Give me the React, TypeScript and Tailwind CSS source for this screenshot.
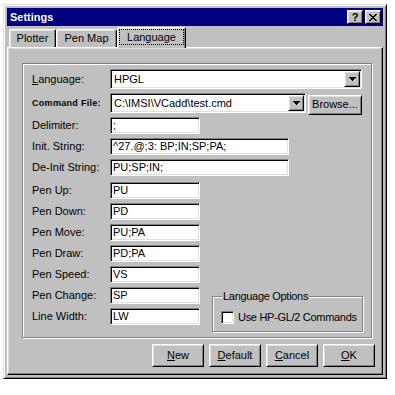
import React from 'react';

const raised =
  'border border-t-white border-l-white border-r-black border-b-black shadow-[inset_1px_1px_0_#dfdfdf,inset_-1px_-1px_0_#808080]';
const sunken =
  'border border-t-[#808080] border-l-[#808080] border-r-white border-b-white shadow-[inset_1px_1px_0_#000,inset_-1px_-1px_0_#dfdfdf]';
const etched = 'border border-[#808080] shadow-[inset_1px_1px_0_#fff,1px_1px_0_#fff]';

const Arrow = () => (
  <svg width="7" height="4" viewBox="0 0 7 4" shapeRendering="crispEdges">
    <polygon points="0,0 7,0 3.5,4" fill="#000" />
  </svg>
);

const Field = ({ label, value, width }: { label: React.ReactNode; value: string; width: string }) => (
  <div className="flex items-center h-[17px]">
    <div className="w-[78px] text-[11px] leading-none">{label}</div>
    <div className={`${sunken} ${width} h-[17px] bg-white flex items-center pl-[2px] text-[11px] leading-none`}>
      {value}
    </div>
  </div>
);

const Combo = ({ value, width }: { value: string; width: string }) => (
  <div className={`${sunken} ${width} h-[20px] bg-white flex items-stretch p-[1px]`}>
    <div className="flex-1 flex items-center pl-[2px] text-[11px] leading-none">{value}</div>
    <div className={`${raised} w-[16px] bg-[#c0c0c0] flex items-center justify-center`}>
      <Arrow />
    </div>
  </div>
);

const Btn = ({ k, rest, w = 'w-[52px]', h = 'h-[23px]' }: { k: string; rest: string; w?: string; h?: string }) => (
  <button className={`${raised} ${w} ${h} bg-[#c0c0c0] text-[11px] leading-none flex items-center justify-center`}>
    <span className="underline underline-offset-[1px]">{k}</span>
    {rest}
  </button>
);

export default function App() {
  return (
    <div className="min-h-[395px] bg-white pt-[4px] pl-[3px] text-black font-['Liberation_Sans',Arial,sans-serif]">
      <div className="w-[384px] h-[375px] bg-[#c0c0c0] border border-t-[#dfdfdf] border-l-[#dfdfdf] border-r-black border-b-black shadow-[inset_1px_1px_0_#fff,inset_-1px_-1px_0_#808080] p-[3px] flex flex-col">
        {/* title bar */}
        <div className="h-[18px] bg-[#000080] flex items-center justify-between pl-[3px] pr-[2px]">
          <span className="text-white font-bold text-[11px] leading-none">Settings</span>
          <div className="flex gap-[2px]">
            <div className={`${raised} w-[16px] h-[14px] bg-[#c0c0c0] flex items-center justify-center text-[11px] font-bold leading-none`}>
              ?
            </div>
            <div className={`${raised} w-[16px] h-[14px] bg-[#c0c0c0] flex items-center justify-center`}>
              <svg width="8" height="7" viewBox="0 0 8 7" shapeRendering="crispEdges">
                <path d="M0 0h2v1h-2zM6 0h2v1h-2zM1 1h2v1h-2zM5 1h2v1h-2zM2 2h4v1h-4zM3 3h2v1h-2zM2 4h4v1h-4zM1 5h2v1h-2zM5 5h2v1h-2zM0 6h2v1h-2zM6 6h2v1h-2z" fill="#000" />
              </svg>
            </div>
          </div>
        </div>

        {/* tabs */}
        <div className="h-[21px] flex items-end pl-[2px] text-[11px] leading-none">
          <div className="w-[47px] h-[18px] border-t border-l border-r border-t-white border-l-white border-r-black rounded-t-[2px] shadow-[inset_-1px_0_0_#808080,inset_1px_1px_0_#dfdfdf] flex items-center justify-center">
            Plotter
          </div>
          <div className="w-[61px] h-[18px] border-t border-l border-r border-t-white border-l-white border-r-black rounded-t-[2px] shadow-[inset_-1px_0_0_#808080,inset_1px_1px_0_#dfdfdf] flex items-center justify-center">
            Pen Map
          </div>
          <div className="relative top-[1px] z-10 w-[69px] h-[21px] bg-[#c0c0c0] border-t border-l border-r border-t-white border-l-white border-r-black rounded-t-[2px] shadow-[inset_-1px_0_0_#808080,inset_1px_1px_0_#dfdfdf] flex pt-[1px] px-[1px] pb-[3px]">
            <div className="flex-1 border border-dotted border-black flex items-center justify-center">Language</div>
          </div>
        </div>

        {/* tab page */}
        <div className="flex-1 border border-t-white border-l-white border-r-black border-b-black shadow-[inset_-1px_-1px_0_#808080,inset_1px_1px_0_#dfdfdf] flex flex-col pt-[15px] pl-[14px] pr-[7px]">
          <div className={`${etched} h-[275px] mr-[3px] pt-[5px] pl-[9px] flex flex-col gap-[4px]`}>
            <div className="flex items-center h-[20px]">
              <div className="w-[78px] text-[11px] leading-none">
                <span className="underline underline-offset-[1px]">L</span>anguage:
              </div>
              <Combo value="HPGL" width="w-[252px]" />
            </div>
            <div className="flex items-center h-[20px]">
              <div className="w-[78px] text-[9px] font-bold tracking-[0.3px] leading-none">Command File:</div>
              <Combo value={'C:\\IMSI\\VCadd\\test.cmd'} width="w-[196px]" />
              <div className="ml-[2px]">
                <button className={`${raised} w-[54px] h-[20px] bg-[#c0c0c0] text-[11px] leading-none`}>Browse...</button>
              </div>
            </div>
            <Field label="Delimiter:" value=";" width="w-[90px]" />
            <Field label="Init. String:" value="^27.@;3: BP;IN;SP;PA;" width="w-[179px]" />
            <Field label="De-Init String:" value="PU;SP;IN;" width="w-[179px]" />

            <div className="flex items-end mt-[2px]">
              <div className="flex flex-col gap-[4px] pb-[7px]">
                <Field label="Pen Up:" value="PU" width="w-[90px]" />
                <Field label="Pen Down:" value="PD" width="w-[90px]" />
                <Field label="Pen Move:" value="PU;PA" width="w-[90px]" />
                <Field label="Pen Draw:" value="PD;PA" width="w-[90px]" />
                <Field label="Pen Speed:" value="VS" width="w-[90px]" />
                <Field label="Pen Change:" value="SP" width="w-[90px]" />
                <Field label="Line Width:" value="LW" width="w-[90px]" />
              </div>
              <div className={`${etched} relative ml-[12px] w-[151px] h-[36px] flex items-center pl-[8px] pt-[6px]`}>
                <span className="absolute -top-[7px] left-[9px] bg-[#c0c0c0] px-[1px] text-[11px] leading-[13px] tracking-[-0.3px]">
                  Language Options
                </span>
                <div className={`${sunken} w-[13px] h-[13px] bg-white`} />
                <span className="ml-[4px] text-[11px] leading-none tracking-[-0.3px]">Use HP-GL/2 Commands</span>
              </div>
            </div>
          </div>

          <div className="mt-[6px] flex justify-end gap-[5px]">
            <Btn k="N" rest="ew" />
            <Btn k="D" rest="efault" />
            <Btn k="C" rest="ancel" />
            <Btn k="O" rest="K" />
          </div>
        </div>
      </div>
    </div>
  );
}
